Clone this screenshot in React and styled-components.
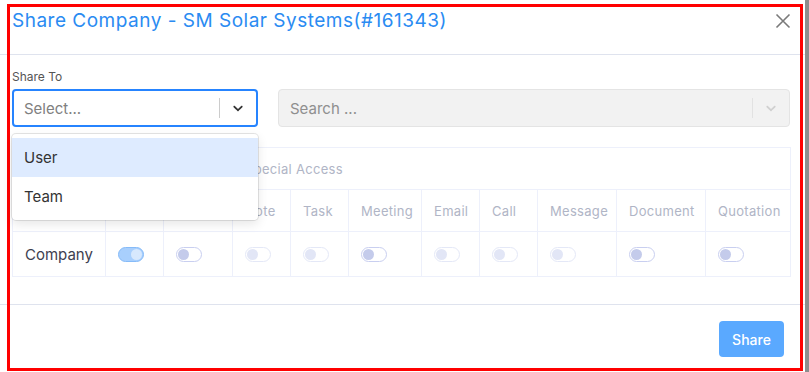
import React from 'react';
import styled, { createGlobalStyle } from 'styled-components';

const GlobalStyle = createGlobalStyle`
  html, body {
    margin: 0;
    padding: 0;
    background: #ffffff;
    font-family: 'Inter', 'Noto Sans', sans-serif;
  }
  * { box-sizing: border-box; }
`;

const Page = styled.div`
  position: relative;
  display: flex;
  width: 809px;
  height: 372px;
  overflow: hidden;
`;

const Modal = styled.div`
  width: 805px;
  height: 372px;
  background: #fff;
  display: flex;
  flex-direction: column;
`;

const Scroll = styled.div`
  flex: 1;
  background: #8d8d8d;
`;

const Header = styled.div`
  height: 55px;
  display: flex;
  align-items: flex-start;
  justify-content: space-between;
  padding: 9px 14px 0 12px;
  border-bottom: 1px solid #dfe3ee;
`;

const Title = styled.h4`
  margin: 0;
  font-size: 19px;
  font-weight: 400;
  color: #2a8bf2;
  letter-spacing: 0.5px;
`;

const Close = styled.button`
  border: 0;
  background: none;
  padding: 0;
  margin-top: 4px;
  width: 16px;
  height: 16px;
  cursor: pointer;
`;

const Body = styled.div`
  height: 250px;
  padding: 14px 12px 0 12px;
  border-bottom: 1px solid #dfe3ee;
`;

const Label = styled.div`
  font-size: 12px;
  color: #555;
  height: 20px;
`;

const Controls = styled.div`
  position: relative;
  display: grid;
  grid-template-columns: 246px 1fr;
  gap: 20px;
  margin-right: 3px;
`;

const Control = styled.div`
  height: 38px;
  display: flex;
  align-items: center;
  border-radius: 4px;
  border: ${p => (p.$focused ? '2px solid #2684ff' : '1px solid #e4e4e4')};
  background: ${p => (p.$disabled ? '#f2f2f2' : '#fff')};
  padding-left: ${p => (p.$focused ? '10px' : '11px')};
`;

const Placeholder = styled.span`
  flex: 1;
  font-size: 15px;
  color: ${p => (p.$disabled ? '#8f8f8f' : '#808080')};
`;

const Sep = styled.span`
  width: 1px;
  height: 20px;
  background: ${p => (p.$disabled ? '#e2e2e2' : '#cccccc')};
`;

const Chevron = styled.span`
  width: 36px;
  display: flex;
  justify-content: center;
  align-items: center;
`;

const Menu = styled.div`
  position: absolute;
  left: 0;
  top: 45px;
  width: 246px;
  background: #fff;
  border-radius: 4px;
  padding: 4px 0;
  box-shadow: 0 0 0 1px rgba(0, 0, 0, 0.1), 0 4px 11px rgba(0, 0, 0, 0.1);
  z-index: 5;
`;

const Option = styled.div`
  height: 39px;
  display: flex;
  align-items: center;
  padding: 0 12px;
  font-size: 15px;
  color: #333;
  background: ${p => (p.$active ? '#deebff' : '#fff')};
`;

const Table = styled.table`
  margin-top: 20px;
  width: 778px;
  border-collapse: collapse;
  table-layout: fixed;
`;

const Th = styled.th`
  height: 42px;
  padding: 0 12px;
  text-align: left;
  font-size: 13px;
  font-weight: 400;
  color: #b0b5c6;
  letter-spacing: 0.3px;
  border: 1px solid #edf0fb;
  white-space: nowrap;
`;

const Td = styled.td`
  height: 45px;
  padding: 0 12px;
  font-size: 15px;
  color: #3d4050;
  border: 1px solid #edf0fb;
`;

const Switch = styled.span`
  display: flex;
  width: 26px;
  height: 15px;
  border-radius: 8px;
  padding: 1px;
  justify-content: ${p => (p.$on ? 'flex-end' : 'flex-start')};
  background: ${p => (p.$on ? '#a8cffd' : '#fff')};
  border: 1px solid ${p => (p.$on ? '#86bbf8' : p.$disabled ? '#e4e8f7' : '#c9cff0')};
  &::after {
    content: '';
    width: 11px;
    height: 11px;
    border-radius: 50%;
    background: ${p => (p.$on ? '#d7e8fd' : p.$disabled ? '#e2e6f6' : '#c4cbeb')};
  }
`;

const Footer = styled.div`
  flex: 1;
  display: flex;
  justify-content: flex-end;
  align-items: flex-start;
  padding: 16px 21px 0 0;
`;

const Button = styled.button`
  width: 65px;
  height: 36px;
  border: 0;
  border-radius: 4px;
  background: #5aa9ff;
  color: #fff;
  font-family: inherit;
  font-size: 14px;
  font-weight: 500;
`;

const Marker = styled.div`
  position: absolute;
  left: 7px;
  top: 4px;
  width: 796px;
  height: 367px;
  border: 3px solid #ff0000;
  pointer-events: none;
`;

const columns = [
  { label: '', w: 93 },
  { label: 'View', w: 58 },
  { label: 'Contact', w: 69 },
  { label: 'Note', w: 58, disabled: true },
  { label: 'Task', w: 58, disabled: true },
  { label: 'Meeting', w: 73 },
  { label: 'Email', w: 58, disabled: true },
  { label: 'Call', w: 58, disabled: true },
  { label: 'Message', w: 79, disabled: true },
  { label: 'Document', w: 89 },
  { label: 'Quotation', w: 85 },
];

const ChevronIcon = ({ color }) => (
  <svg width="16" height="16" viewBox="0 0 20 20">
    <path
      fill={color}
      d="M4.516 7.548c0.436-0.446 1.043-0.481 1.576 0l3.908 3.747 3.908-3.747c0.533-0.481 1.141-0.446 1.574 0 0.436 0.445 0.408 1.197 0 1.615-0.406 0.418-4.695 4.502-4.695 4.502-0.217 0.223-0.502 0.335-0.787 0.335s-0.57-0.112-0.789-0.335c0 0-4.287-4.084-4.695-4.502s-0.436-1.17 0-1.615z"
    />
  </svg>
);

export default function App() {
  return (
    <Page>
      <GlobalStyle />
      <Modal>
        <Header>
          <Title>Share Company - SM Solar Systems(#161343)</Title>
          <Close aria-label="close">
            <svg width="16" height="16" viewBox="0 0 16 16">
              <path d="M1.5 1.5 L14.5 14.5 M14.5 1.5 L1.5 14.5" stroke="#7a7a7a" strokeWidth="1.6" />
            </svg>
          </Close>
        </Header>
        <Body>
          <Label>Share To</Label>
          <Controls>
            <Control $focused>
              <Placeholder>Select...</Placeholder>
              <Sep />
              <Chevron>
                <ChevronIcon color="#333" />
              </Chevron>
            </Control>
            <Control $disabled>
              <Placeholder $disabled>Search ...</Placeholder>
              <Sep $disabled />
              <Chevron>
                <ChevronIcon color="#d0d0d0" />
              </Chevron>
            </Control>
            <Menu>
              <Option $active>User</Option>
              <Option>Team</Option>
            </Menu>
          </Controls>
          <Table>
            <colgroup>
              {columns.map((c, i) => (
                <col key={i} style={{ width: c.w }} />
              ))}
            </colgroup>
            <thead>
              <tr>
                <Th colSpan={3} />
                <Th colSpan={8}>Special Access</Th>
              </tr>
              <tr>
                {columns.map((c, i) => (
                  <Th key={i}>{c.label}</Th>
                ))}
              </tr>
            </thead>
            <tbody>
              <tr>
                <Td>Company</Td>
                {columns.slice(1).map((c, i) => (
                  <Td key={i}>
                    <Switch $on={i === 0} $disabled={c.disabled} />
                  </Td>
                ))}
              </tr>
            </tbody>
          </Table>
        </Body>
        <Footer>
          <Button>Share</Button>
        </Footer>
      </Modal>
      <Scroll />
      <Marker />
    </Page>
  );
}
